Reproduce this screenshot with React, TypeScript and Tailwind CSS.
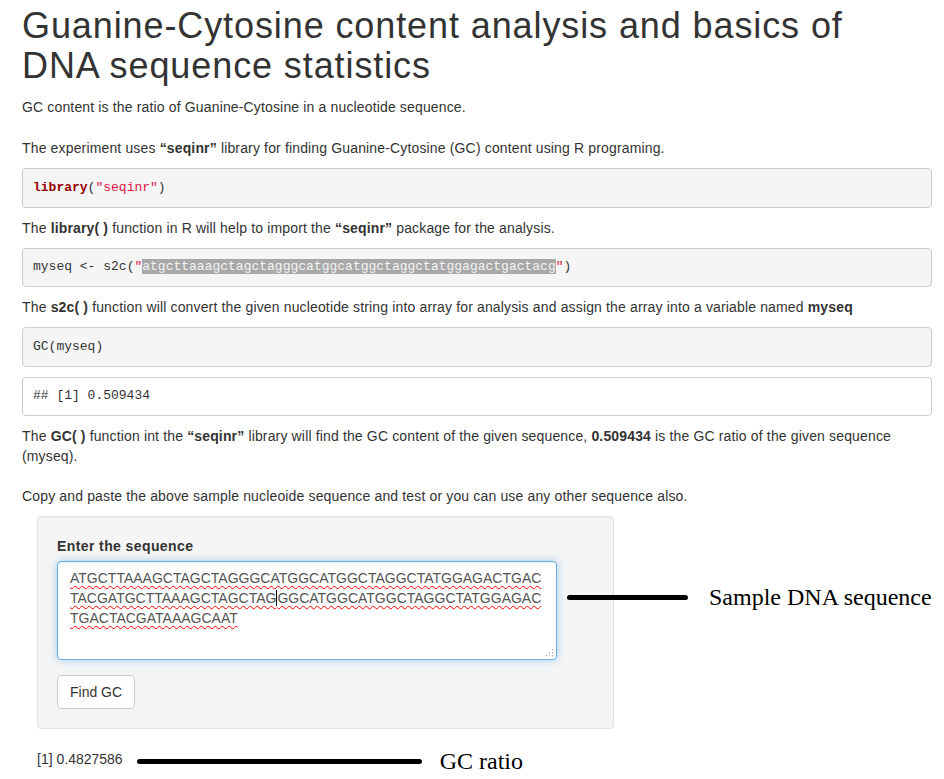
import React from "react";

const sans = { fontFamily: '"Liberation Sans", Arial, Helvetica, sans-serif' };

export default function App() {
  return (
    <div
      className="min-h-[779px] bg-white pl-[22px] pr-[12px] pt-[6px] text-[14px] leading-[20px] text-[#333]"
      style={sans}
    >
      <h1 className="mb-[12px] text-[36px] font-normal leading-[1.1] tracking-[0.9px] text-[#333]">
        Guanine-Cytosine content analysis and basics of
        <br />
        DNA sequence statistics
      </h1>
      <div className="tracking-[0.15px]">
        <p className="mb-[21px]">GC content is the ratio of Guanine-Cytosine in a nucleotide sequence.</p>
        <p className="mb-[10px]">
          The experiment uses <b>“seqinr”</b> library for finding Guanine-Cytosine (GC) content using R programing.
        </p>
      </div>
      <pre className="mb-[10px] rounded-[4px] border border-[#ccc] bg-[#f5f5f5] px-[10px] py-[9.5px] font-['Liberation_Mono',monospace] text-[13px] leading-[1.42857]">
        <span className="font-bold text-[#900]">library</span>
        <span>(</span>
        <span className="text-[#d14]">"seqinr"</span>
        <span>)</span>
      </pre>
      <p className="mb-[10px] tracking-[0.15px]">
        The <b>library( )</b> function in R will help to import the <b>“seqinr”</b> package for the analysis.
      </p>
      <pre className="mb-[10px] rounded-[4px] border border-[#ccc] bg-[#f5f5f5] px-[10px] py-[9.5px] font-['Liberation_Mono',monospace] text-[13px] leading-[1.42857] text-[#333]">
        <span>myseq {"<-"} s2c(</span>
        <span className="text-[#d14]">"</span>
        <span className="bg-[#a8a8a8] text-[#f4f4f4]">atgcttaaagctagctagggcatggcatggctaggctatggagactgactacg</span>
        <span className="text-[#d14]">"</span>
        <span>)</span>
      </pre>
      <p className="mb-[10px] tracking-[0.15px]">
        The <b>s2c( )</b> function will convert the given nucleotide string into array for analysis and assign the array
        into a variable named <b>myseq</b>
      </p>
      <pre className="mb-[10px] rounded-[4px] border border-[#ccc] bg-[#f5f5f5] px-[10px] py-[9.5px] font-['Liberation_Mono',monospace] text-[13px] leading-[1.42857] text-[#333]">
        GC(myseq)
      </pre>
      <pre className="mb-[10px] rounded-[4px] border border-[#ccc] bg-white px-[10px] py-[9.5px] font-['Liberation_Mono',monospace] text-[13px] leading-[1.42857] text-[#333]">
        ## [1] 0.509434
      </pre>
      <div className="tracking-[0.15px]">
        <p className="mb-[20px]">
          The <b>GC( )</b> function int the <b>“seqinr”</b> library will find the GC content of the given sequence,{" "}
          <b>0.509434</b> is the GC ratio of the given sequence
          <br />
          (myseq).
        </p>
        <p className="mb-[10px]">
          Copy and paste the above sample nucleoide sequence and test or you can use any other sequence also.
        </p>
      </div>

      <div className="pl-[15px]">
        <div className="relative mb-[20px] w-[577px] rounded-[4px] border border-[#e3e3e3] bg-[#f5f5f5] p-[19px] shadow-[inset_0_1px_1px_rgba(0,0,0,0.05)]">
          <div className="mb-[15px]">
            <label className="mb-[5px] block font-bold tracking-[0.4px]">Enter the sequence</label>
            <div className="relative h-[99px] w-[500px] rounded-[4px] border border-[#66afe9] bg-white px-[12px] py-[6px] text-[14px] leading-[20px] text-[#555] shadow-[inset_0_1px_1px_rgba(0,0,0,0.075),0_0_8px_rgba(102,175,233,0.6)]">
              <div className="whitespace-pre">
                <span className="underline decoration-[#f00] decoration-wavy decoration-1 underline-offset-[2px]">
                  ATGCTTAAAGCTAGCTAGGGCATGGCATGGCTAGGCTATGGAGACTGAC
                </span>
              </div>
              <div className="whitespace-pre">
                <span className="underline decoration-[#f00] decoration-wavy decoration-1 underline-offset-[2px]">
                  TACGATGCTTAAAGCTAGCTAG
                  <span className="inline-block h-[16px] w-0 border-l border-black align-[-3px]"></span>
                  GGCATGGCATGGCTAGGCTATGGAGAC
                </span>
              </div>
              <div className="whitespace-pre">
                <span className="underline decoration-[#f00] decoration-wavy decoration-1 underline-offset-[2px]">
                  TGACTACGATAAAGCAAT
                </span>
              </div>
              <svg className="absolute bottom-[2px] right-[2px]" width="8" height="8" viewBox="0 0 8 8">
                <rect x="6" y="0" width="1.2" height="1.2" fill="#aaa" />
                <rect x="3" y="3" width="1.2" height="1.2" fill="#aaa" />
                <rect x="6" y="3" width="1.2" height="1.2" fill="#aaa" />
                <rect x="0" y="6" width="1.2" height="1.2" fill="#aaa" />
                <rect x="3" y="6" width="1.2" height="1.2" fill="#aaa" />
                <rect x="6" y="6" width="1.2" height="1.2" fill="#aaa" />
              </svg>
            </div>
          </div>
          <button className="h-[34px] rounded-[4px] border border-[#ccc] bg-white px-[12px] text-[14px] leading-[20px] text-[#333]">
            Find GC
          </button>

          <div className="absolute left-[529px] top-[78px] h-[5px] w-[121px] rounded-full bg-black"></div>
          <div
            className="absolute left-[671px] top-[66px] whitespace-nowrap text-[24px] leading-[28px] text-black"
            style={{ fontFamily: '"Liberation Serif", "Times New Roman", serif' }}
          >
            Sample DNA sequence
          </div>
        </div>

        <div className="flex h-[20px] items-center">
          <span>[1] 0.4827586</span>
          <div className="ml-[14px] mt-[5px] h-[5px] w-[285px] shrink-0 rounded-full bg-black"></div>
          <span
            className="ml-[18px] mt-[4px] whitespace-nowrap text-[24px] leading-[28px] text-black"
            style={{ fontFamily: '"Liberation Serif", "Times New Roman", serif' }}
          >
            GC ratio
          </span>
        </div>
      </div>
    </div>
  );
}
